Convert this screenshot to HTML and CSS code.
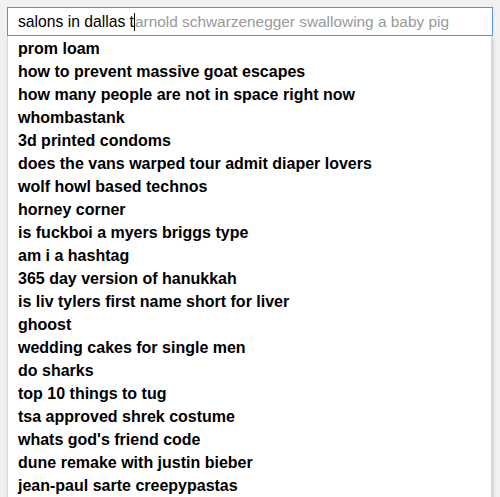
FILE: index.html
```html
<!DOCTYPE html>
<html>
<head>
<meta charset="utf-8">
<link rel="stylesheet" href="styles.css">
</head>
<body>
<div class="search">
  <div class="input"><span class="typed">salons in dallas t</span><span class="caret"></span><span class="hint">arnold schwarzenegger swallowing a baby pig</span></div>
  <ul class="suggestions">
    <li>prom loam</li>
    <li>how to prevent massive goat escapes</li>
    <li>how many people are not in space right now</li>
    <li>whombastank</li>
    <li>3d printed condoms</li>
    <li>does the vans warped tour admit diaper lovers</li>
    <li>wolf howl based technos</li>
    <li>horney corner</li>
    <li>is fuckboi a myers briggs type</li>
    <li>am i a hashtag</li>
    <li>365 day version of hanukkah</li>
    <li>is liv tylers first name short for liver</li>
    <li>ghoost</li>
    <li>wedding cakes for single men</li>
    <li>do sharks</li>
    <li>top 10 things to tug</li>
    <li>tsa approved shrek costume</li>
    <li>whats god's friend code</li>
    <li>dune remake with justin bieber</li>
    <li>jean-paul sarte creepypastas</li>
  </ul>
</div>
</body>
</html>
```
FILE: styles.css
```css
html, body {
  margin: 0;
  height: 100%;
  overflow: hidden;
}
body {
  background: #f1f1f1;
  font-family: "Liberation Sans", Arial, sans-serif;
  padding: 7px 7px 0 7px;
  box-sizing: border-box;
}
.search {
  display: flex;
  flex-direction: column;
}
.input {
  height: 29px;
  box-sizing: border-box;
  border: 1px solid #4d90fe;
  background: #fff;
  padding-left: 10px;
  font-size: 15.7px;
  line-height: 27px;
  white-space: nowrap;
  display: flex;
  align-items: center;
}
.typed {
  color: #000;
}
.caret {
  width: 1px;
  height: 18px;
  background: #000;
}
.hint {
  color: #999;
  font-size: 15.4px;
}
.suggestions {
  list-style: none;
  margin: 0 1px 0 0;
  padding: 1px 0 20px 10px;
  background: #fff;
  border: 1px solid #d9d9d9;
  border-top: none;
  box-shadow: 1px 2px 3px rgba(0, 0, 0, 0.18);
}
.suggestions li {
  font-weight: bold;
  font-size: 16px;
  line-height: 23px;
  color: #000;
}
```
